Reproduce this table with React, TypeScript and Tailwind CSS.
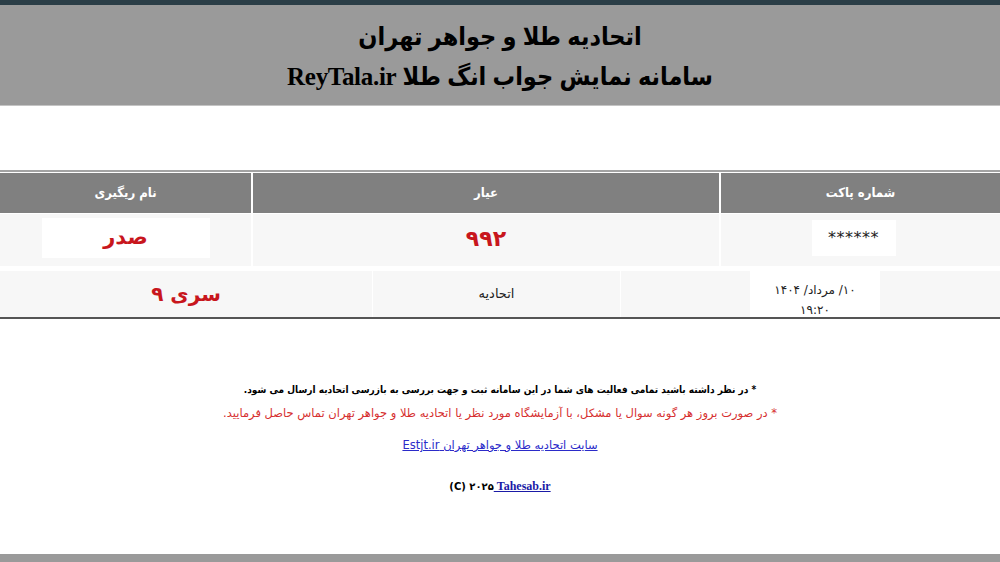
import React from "react";

export default function App() {
  const body = { fontFamily: '"DejaVu Sans", "Noto Sans", sans-serif' };
  const cond = { fontFamily: '"DejaVu Sans Condensed", "DejaVu Sans", sans-serif' };
  return (
    <div dir="rtl" className="w-[1000px] h-[562px] bg-white flex flex-col overflow-hidden" style={body}>
      <div className="h-[5px] bg-[#2b3e47]" />
      <div className="h-[101px] bg-[#9a9a9a] border-b border-[#c4c4c4] flex flex-col items-center text-black font-bold" style={{ fontFamily: '"Liberation Serif", "DejaVu Sans Condensed", "DejaVu Sans", serif' }}>
        <div className="mt-[15px] text-[25px] leading-[34px] tracking-[-0.5px]">اتحادیه طلا و جواهر تهران</div>
        <div className="mt-[6px] text-[25px] leading-[34px] tracking-[-0.3px]">سامانه نمایش جواب انگ طلا ReyTala.ir</div>
      </div>
      <div className="h-[64px]" />
      <div className="border-t-2 border-[#a3a3a3] pt-[1px]">
        <div className="grid grid-cols-[279px_466px_1fr] gap-x-[2px] gap-y-[1px]">
          <div className="h-[40px] bg-[#808080] text-white text-[13px] font-bold flex items-center justify-center" style={cond}>شماره پاکت</div>
          <div className="h-[40px] bg-[#808080] text-white text-[13px] font-bold flex items-center justify-center" style={cond}>عیار</div>
          <div className="h-[40px] bg-[#808080] text-white text-[13px] font-bold flex items-center justify-center" style={cond}>نام ریگیری</div>
          <div className="h-[52px] bg-[#f7f7f7] flex items-center justify-center">
            <div className="w-[84px] h-[36px] -mt-[4px] mr-[14px] bg-white flex items-center justify-center text-[16px] tracking-[0.5px] text-[#222]">******</div>
          </div>
          <div className="h-[52px] bg-[#f7f7f7] flex items-center justify-center text-[#c8161d] text-[22px] font-bold pb-[4px]">۹۹۲</div>
          <div className="h-[52px] bg-[#f7f7f7] flex items-center justify-center">
            <div className="w-[168px] h-[40px] -mt-[4px] bg-white flex items-center justify-center text-[#c8161d] text-[21px] font-bold">صدر</div>
          </div>
        </div>
      </div>
      <div className="h-[5px]" />
      <div className="grid grid-cols-[120px_128px_129px_247px_1fr] gap-x-[1px] border-b-2 border-[#555]">
        <div className="h-[46px] bg-[#f7f7f7]" />
        <div className="h-[46px] bg-white flex flex-col items-center justify-end text-[12px] leading-[20px] text-[#222]">
          <span>۱۰/ مرداد/ ۱۴۰۴</span>
          <span className="-mb-[3px]">۱۹:۲۰</span>
        </div>
        <div className="h-[46px] bg-[#f7f7f7]" />
        <div className="h-[46px] bg-[#f7f7f7] flex items-center justify-center text-[13px] text-[#222]">اتحادیه</div>
        <div className="h-[46px] bg-[#f7f7f7] flex items-center justify-center text-[#c8161d] text-[20px] font-bold">سری ۹</div>
      </div>
      <div className="mt-[61px] text-center text-[10px] leading-[20px] font-bold text-black" style={cond}>* در نظر داشته باشید تمامی فعالیت های شما در این سامانه ثبت و جهت بررسی به بازرسی اتحادیه ارسال می شود.</div>
      <div className="mt-[3px] text-center text-[11.5px] leading-[20px] text-[#d62f2f]">* در صورت بروز هر گونه سوال یا مشکل، با آزمایشگاه مورد نظر یا اتحادیه طلا و جواهر تهران تماس حاصل فرمایید.</div>
      <div className="mt-[12px] text-center text-[11.5px] leading-[20px]">
        <a href="#" className="text-[#2b2bc9] underline">سایت اتحادیه طلا و جواهر تهران Estjt.ir</a>
      </div>
      <div dir="ltr" className="mt-[21px] text-center text-[10px] leading-[20px] font-bold text-black">
        (C) ۲۰۲۵<a href="#" className="text-[#1a1aa6] underline text-[12px]" style={{ fontFamily: '"Liberation Serif", serif' }}> Tahesab.ir</a>
      </div>
      <div className="mt-auto h-[8px] bg-[#9a9a9a]" />
    </div>
  );
}
